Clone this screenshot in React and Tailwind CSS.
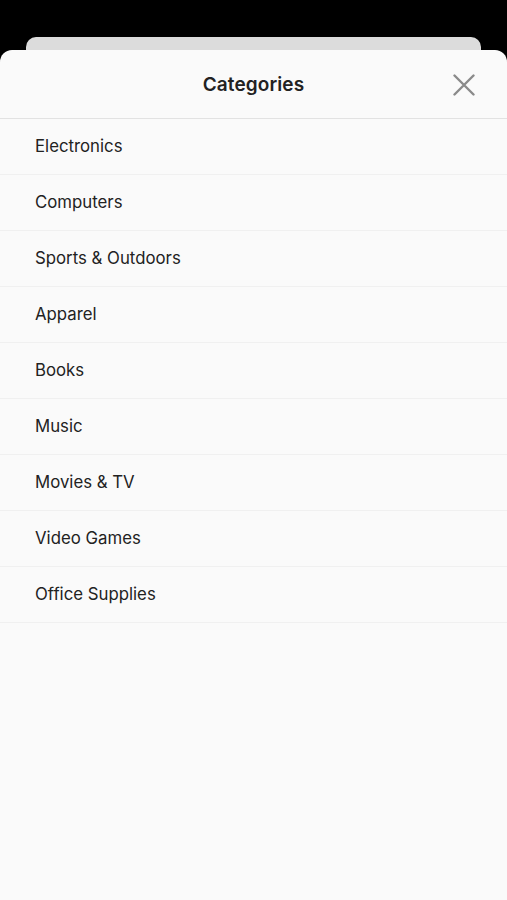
import React from "react";

const items = [
  "Electronics",
  "Computers",
  "Sports & Outdoors",
  "Apparel",
  "Books",
  "Music",
  "Movies & TV",
  "Video Games",
  "Office Supplies",
];

export default function App() {
  return (
    <div
      className="w-[507px] h-[900px] bg-black flex flex-col overflow-hidden"
      style={{ fontFamily: "Inter, 'Noto Sans', sans-serif" }}
    >
      <div className="h-[37px] shrink-0" />
      <div className="mx-[26px] h-[13px] shrink-0 bg-[#dcdcdc] rounded-t-[10px]" />
      <div className="flex-1 bg-[#fafafa] rounded-t-[12px] flex flex-col">
        <div className="h-[69px] shrink-0 border-b border-[#e2e2e2] relative flex items-center justify-center pt-[3px]">
          <span className="text-[19px] font-semibold text-[#222] tracking-[0.1px]">Categories</span>
          <button className="absolute right-[32px] top-[24px] w-[22px] h-[22px] flex items-center justify-center">
            <svg width="22" height="22" viewBox="0 0 22 22">
              <path d="M1.5 1.5 L20.5 20.5 M20.5 1.5 L1.5 20.5" stroke="#8a8a8a" strokeWidth="2.4" strokeLinecap="round" />
            </svg>
          </button>
        </div>
        <div className="flex flex-col">
          {items.map((t, i) => (
            <div key={t} className="h-[56px] border-b border-[#f0f0f0] flex items-center pl-[35px] pt-[1px]">
              <span className="text-[16.8px] text-[#222]">{t}</span>
            </div>
          ))}
        </div>
      </div>
    </div>
  );
}
